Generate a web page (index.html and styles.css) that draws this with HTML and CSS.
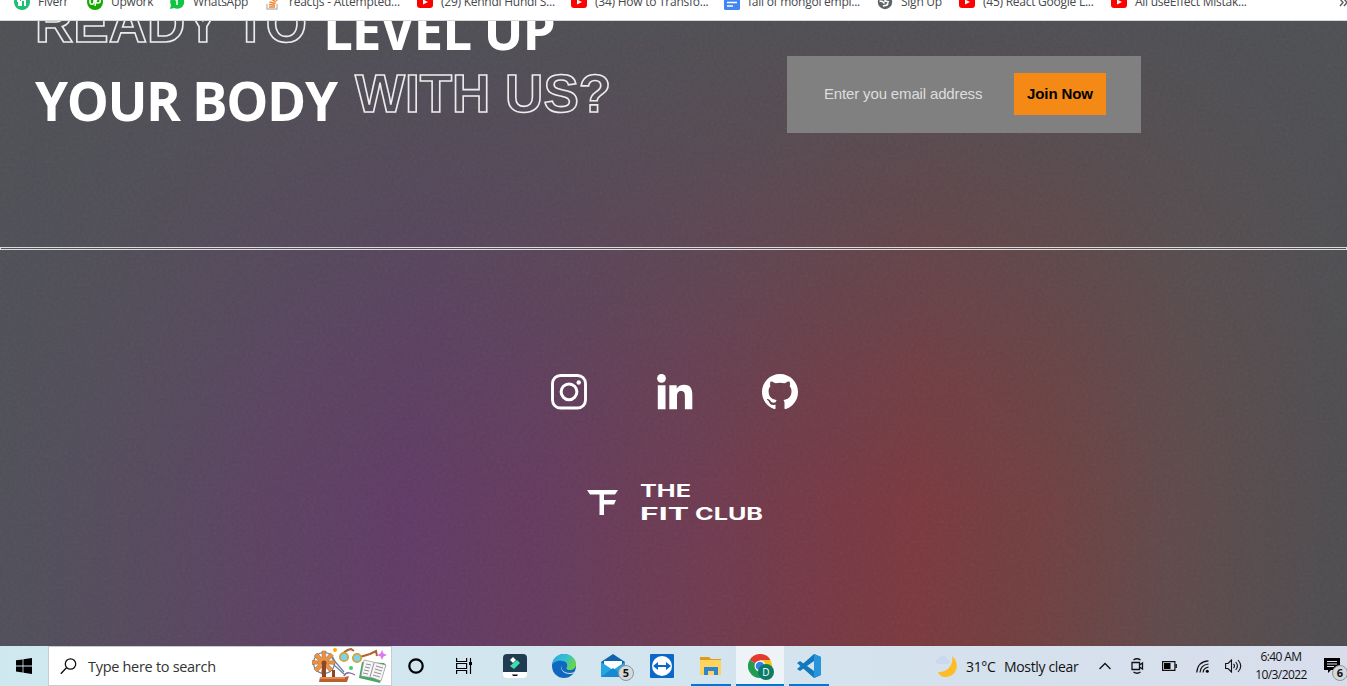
FILE: index.html
```html
<!DOCTYPE html>
<html lang="en">
<head>
<meta charset="utf-8">
<title>The Fit Club</title>
<link rel="stylesheet" href="styles.css">
</head>
<body>
<nav class="bookmarks">
  <div class="bm b1"><svg viewBox="0 0 16 16"><circle cx="8" cy="8" r="8" fill="#1dbf73"/><path d="M5 12V7H4V5h1c0-2 2-3 4-2v2H7.500M7 6h4v6M7 7v5" fill="none" stroke="#fff" stroke-width="2"/></svg><span>Fiverr</span></div>
  <div class="bm b2"><svg viewBox="0 0 16 16"><circle cx="8" cy="8" r="8" fill="#14a800"/><path d="M3 5v3c0 3 4 3 4 0V5c1 3 2 4 4 4 3 0 3-4 0-4-2 0-2 2-3 7" fill="none" stroke="#fff" stroke-width="1.500"/></svg><span>Upwork</span></div>
  <div class="bm b3"><svg viewBox="0 0 16 16"><path d="M1 15l1-4A7 7 0 1 1 5 14z" fill="#12c443"/><path d="M6 6l2-1v6" fill="none" stroke="#fff" stroke-width="1.500"/></svg><span>WhatsApp</span></div>
  <div class="bm b4"><svg viewBox="0 0 16 16"><path d="M2 10v5h10v-5" fill="none" stroke="#bcbbbb" stroke-width="1.400"/><path d="M4 13h6M4 10.500l6 .7M4.500 8l6 1.500M6 5l5 3M9 2l3 5" fill="none" stroke="#f48024" stroke-width="1.400"/></svg><span>reactjs - Attempted...</span></div>
  <div class="bm b5"><svg viewBox="0 0 16 16"><rect y="2" width="16" height="12" rx="3" fill="#f00"/><path d="M6 5.500v5L11 8z" fill="#fff"/></svg><span>(29) Kehndi Hundi S...</span></div>
  <div class="bm b6"><svg viewBox="0 0 16 16"><rect y="2" width="16" height="12" rx="3" fill="#f00"/><path d="M6 5.500v5L11 8z" fill="#fff"/></svg><span>(34) How to Transfo...</span></div>
  <div class="bm b7"><svg viewBox="0 0 16 16"><rect width="16" height="16" rx="1.500" fill="#4285f4"/><path d="M3 5h10M3 8.500h10M3 12h6" stroke="#fff" stroke-width="1.600"/></svg><span>fall of mongol empi...</span></div>
  <div class="bm b8"><svg viewBox="0 0 16 16"><circle cx="8" cy="8" r="7.200" fill="#5f6368"/><path d="M2.500 7l3 .5 2 2M9 4.500l-1 2.500 4 1M6 12l4-1 1-2" fill="none" stroke="#fff" stroke-width="1.700"/></svg><span>Sign Up</span></div>
  <div class="bm b9"><svg viewBox="0 0 16 16"><rect y="2" width="16" height="12" rx="3" fill="#f00"/><path d="M6 5.500v5L11 8z" fill="#fff"/></svg><span>(45) React Google L...</span></div>
  <div class="bm b10"><svg viewBox="0 0 16 16"><rect y="2" width="16" height="12" rx="3" fill="#f00"/><path d="M6 5.500v5L11 8z" fill="#fff"/></svg><span>All useEffect Mistak...</span></div>
  <svg class="more" viewBox="0 0 10 8"><path d="M1 0l3 3.500L1 7M5 0l3 3.500L5 7" fill="none" stroke="#5f6368" stroke-width="1.500"/></svg>
</nav>

<main class="page">
  <svg class="grain" aria-hidden="true"><filter id="grain"><feTurbulence type="fractalNoise" baseFrequency="0.35" numOctaves="2" seed="4"/><feColorMatrix type="saturate" values="0"/></filter><rect width="100%" height="100%" filter="url(#grain)"/></svg>
  <section class="join">
    <h1 class="title">
      <span class="line"><span class="outline ready">READY TO</span><span class="solid level">LEVEL UP</span></span>
      <span class="line"><span class="solid body">YOUR BODY</span><span class="outline with">WITH US?</span></span>
    </h1>
    <form class="form">
      <input class="email" type="text" placeholder="Enter you email address">
      <button class="btn" type="button">Join Now</button>
    </form>
  </section>
  <hr class="rule">
  <footer class="footer">
    <div class="social">
      <svg viewBox="0 0 36 36"><rect x="1.500" y="1.500" width="33" height="32.500" rx="8" fill="none" stroke="#fff" stroke-width="2.900"/><circle cx="18" cy="17.800" r="7.900" fill="none" stroke="#fff" stroke-width="3"/><circle cx="27.700" cy="8.500" r="2.200" fill="#fff"/></svg>
      <svg viewBox="0 0 36 36"><circle cx="4.500" cy="4.300" r="4.400" fill="#fff"/><path d="M.8 11.300h7.700V35.300H.8zM12.300 11.300h7.400v3.300c1.300-2.400 4-3.900 7.300-3.900 6.500 0 8.300 3.800 8.300 10.400v14.200h-7.400V22.700c0-3.100-.2-5.700-3.800-5.700-3.500 0-4.100 2.600-4.100 5.500v12.800h-7.700z" fill="#fff"/></svg>
      <svg viewBox="0 0 16 16"><path d="M8 0C3.580 0 0 3.580 0 8c0 3.540 2.290 6.530 5.470 7.590.4.070.55-.17.55-.38 0-.19-.01-.82-.01-1.490-2.010.37-2.530-.49-2.690-.94-.09-.23-.48-.94-.82-1.130-.28-.15-.68-.52-.01-.53.63-.01 1.080.58 1.230.82.72 1.210 1.870.87 2.330.66.07-.52.28-.87.51-1.070-1.780-.2-3.640-.89-3.640-3.950 0-.87.31-1.590.82-2.150-.08-.2-.36-1.020.08-2.120 0 0 .67-.21 2.200.82a7.600 7.600 0 0 1 4 0c1.530-1.040 2.200-.82 2.200-.82.44 1.100.16 1.920.08 2.120.51.56.82 1.270.82 2.150 0 3.070-1.870 3.750-3.650 3.950.29.25.54.73.54 1.480 0 1.070-.01 1.930-.01 2.200 0 .21.150.46.550.38A8 8 0 0 0 16 8c0-4.420-3.580-8-8-8z" fill="#fff"/></svg>
    </div>
    <div class="logo">
      <svg class="mark" viewBox="0 0 32 26"><path d="M0 0h31l-3 4.500H17V10h12l-2 4.500H17V25h-4.500V4.500H3z" fill="#fff"/></svg>
      <svg class="name" viewBox="0 0 124 42"><text x="-1" y="16" textLength="51" lengthAdjust="spacingAndGlyphs">THE</text><text x="-1" y="39" textLength="49" lengthAdjust="spacingAndGlyphs">FIT</text><text x="54" y="39" textLength="68" lengthAdjust="spacingAndGlyphs">CLUB</text></svg>
    </div>
  </footer>
</main>

<div class="taskbar">
  <div class="start"><svg viewBox="0 0 16 16"><path d="M0 2.300l6.600-.9v6.100H0zM7.400 1.300L16 0v7.500H7.400zM0 8.400h6.600v6.100L0 13.600zM7.400 8.400H16V16l-8.600-1.300z"/></svg></div>
  <div class="search">
    <svg class="lens" viewBox="0 0 17 17"><circle cx="10.500" cy="6" r="5.200" fill="none" stroke="#111" stroke-width="1.300"/><path d="M6.500 9.700L.8 15.700" stroke="#111" stroke-width="1.400"/></svg>
    <span class="hint">Type here to search</span>
    <svg class="doodle" viewBox="0 0 76 36">
      <g stroke="#6681a8" stroke-width="1.200" fill="none"><circle cx="12" cy="15" r="10.500"/><path d="M20 10l12 14M22 17l10 9"/></g>
      <path d="M10 3h4l-.5 7 5-5 3 3-5.500 5 7-.5v4l-7-.5 5 5-3 3-4.500-5v7h-4l.5-7-5 5-3-3 5-5-7 .5v-4l7 .5-5-5 3-3 5 5z" fill="#e79345" stroke="#b9642f" stroke-width=".5"/>
      <g fill="#8d452b"><circle cx="12" cy="15" r="2.500"/><path d="M10 15h4v15h-4zM20 22h3v8h-3z"/></g>
      <path d="M8 29h25l4-1-2 6H7z" fill="#b9602e"/><path d="M8 29h25v2H8z" fill="#df8a4a"/>
      <path d="M30 8c1-3 4-6 9-7l3 2M48 9l10-3 6-3 1 5" fill="none" stroke="#b5632c" stroke-width="2"/>
      <circle cx="32" cy="9" r="4.200" fill="#76d6ef" stroke="#d9a02f" stroke-width="1.700"/><circle cx="45" cy="10" r="4.200" fill="#76d6ef" stroke="#d9a02f" stroke-width="1.700"/>
      <path d="M50 14l-3 16 13 3 8 2 6-18-2-2z" fill="#43a863"/><path d="M52 12l9 2 13 3-5 16-8-3-12-2z" fill="#f7f4f4" stroke="#888" stroke-width=".6"/><path d="M62 15l-4 14M54 16l5 1M53 19l5 1M52 22l5 1M51 25l5 1M64 18l7 2M63 21l7 2M62 24l7 2M61 27l7 2" stroke="#858894" stroke-width=".9"/>
      <circle cx="23" cy="2" r="2" fill="#fa0"/><circle cx="39" cy="20" r="2" fill="#42cc72"/><path d="M70 2l1.500 3.500L75 7l-3.500 1.500L70 12l-1.500-3.500L65 7l3.500-1.500z" fill="#db78ef"/><path d="M32 28c2-5 8-3 11-1" fill="none" stroke="#8a6a9a" stroke-width="1.500"/>
    </svg>
  </div>
  <div class="task first"><svg class="i16" viewBox="0 0 16 16"><circle cx="8" cy="8" r="6.700" fill="none" stroke="#000" stroke-width="2.200"/></svg></div>
  <div class="task"><svg class="i16" viewBox="0 0 16 16"><path d="M.6 0v3.500h10V0M.6 16v-3.500h10V16M.6 5.500h10v5H.6zM14.500 0v16" fill="none" stroke="#000" stroke-width="1.200"/><path d="M13 4h3v3h-3z"/></svg></div>
  <div class="task wide"><svg class="i24" viewBox="0 0 24 24"><path d="M0 18h24v2q0 4-4 4H4q-4 0-4-4z" fill="#fff"/><path d="M4 0h16q4 0 4 4v14H0V4q0-4 4-4z" fill="#203c50"/><path d="M10 3l3 3-3 3-3-3z" fill="#fff"/><path d="M7 12l7-6 3 3-6 6z" fill="#3be0b0"/><path d="M9 20.500h6l-1 1.500h-4z" fill="#111"/></svg></div>
  <div class="task"><svg class="i24" viewBox="0 0 24 24"><defs><linearGradient id="eg" x2="1" y2=".4"><stop stop-color="#2aa8e6"/><stop offset=".6" stop-color="#35c1d0"/><stop offset="1" stop-color="#67d64b"/></linearGradient></defs><circle cx="12" cy="12" r="12" fill="#0f68bd"/><path d="M0 11C1 4 6 0 12 0c7 0 12 5 12 10 0 4-3 6-6 6-4 0-4-2-3-3 1-3-1-6-5-6C5 6 1 9 0 11z" fill="url(#eg)"/><path d="M10.500 10c-3 3 0 9 7 9 3 0 5-1 6-2l-1 2c-4 2-10 1-12-2-2-2-2-5 0-7z" fill="#d4e7ef"/></svg></div>
  <div class="task"><svg class="i24" viewBox="0 0 24 24"><path d="M0 8l12-8 12 8v4H0z" fill="#1263ae"/><path d="M3 7h18v8H3z" fill="#fff"/><path d="M0 8l12 8 12-8v15H0z" fill="#27a5e3"/><path d="M0 23l12-9 12 9z" fill="#1689d0"/></svg><b class="count mail">5</b></div>
  <div class="task"><svg class="i24" viewBox="0 0 24 24"><rect width="24" height="24" rx="1" fill="#0b68c9"/><circle cx="12" cy="12" r="10" fill="#fff"/><path d="M3 12l5-4v3h8V8l5 4-5 4v-3H8v3z" fill="#0b68c9"/></svg></div>
  <div class="task open"><svg class="i24" viewBox="0 0 24 24"><path d="M1 3h9l2 2h10v5H1z" fill="#e19b1a"/><path d="M1 6h21v15H1z" fill="#ffd35f"/><path d="M5 13h14v8h-4v-4H9v4H5z" fill="#2f83cf"/></svg></div>
  <div class="task open active"><svg class="i24" viewBox="0 0 24 24"><circle cx="12" cy="12" r="12" fill="#fff"/><path d="M12 12L1.600 6A12 12 0 0 1 22.400 6z" fill="#e33b2e"/><path d="M12 12L1.600 6A12 12 0 0 0 12 24l5-9z" fill="#229d50"/><path d="M12 12l0 12A12 12 0 0 0 22.400 6H12z" fill="#fbc319"/><circle cx="12" cy="12" r="5.500" fill="#fff"/><circle cx="12" cy="12" r="4.300" fill="#377ef0"/></svg><span class="profile">D</span></div>
  <div class="task open"><svg class="i24" viewBox="0 0 24 24"><path d="M17 0l7 3v18l-7 3L0 9l3-2 14 10V7L3 17l-3-2z" fill="#1179bd"/><path d="M17 0l7 3v18l-7 3z" fill="#2695db"/></svg></div>

  <div class="tray">
    <svg class="moon" viewBox="0 0 24 22"><path d="M17 1c8 6 6 20-6 21-4 0-7-2-8-5 9 1 16-7 14-16z" fill="#fdbd25"/><path d="M3 9C-1 8 0 4 4 4c1-5 8-4 8 0 4 0 4 5 0 5z" fill="#c9d9ee"/></svg>
    <span class="weather">31°C</span><span class="weather clear">Mostly clear</span>
    <svg class="chev" viewBox="0 0 12 8"><path d="M.5 7L6 1.500 11.500 7" fill="none" stroke="#111" stroke-width="1.300"/></svg>
    <svg class="meet" viewBox="0 0 13 16"><path d="M1 4.500h7.500v7H1zM8.500 7l3-2v6l-3-2M2.500 2q3.500-2.500 7 0M2.500 14q3.500 2.500 7 0" fill="none" stroke="#111" stroke-width="1.300"/></svg>
    <svg class="battery" viewBox="0 0 15 10"><path d="M.6.600h12.300v8.800H.6zM14.300 3v4" fill="none" stroke="#111" stroke-width="1.200"/><path d="M2 2h6.500v6H2z"/></svg>
    <svg class="wifi" viewBox="0 0 13 13"><path d="M.8 12.500Q1.500 1.500 12.500.8M4 12.500Q4.500 5 12.500 4M7 12.500Q7.500 8 12.500 7.200" fill="none" stroke="#111" stroke-width="1.200"/><circle cx="11.300" cy="11.300" r="1.500"/></svg>
    <svg class="sound" viewBox="0 0 17 14"><path d="M.6 4.500h2.400L6.500 1v12L3 9.500H.6zM8.500 4.800q2 2.200 0 4.400M10.700 3q3.500 4 0 8M13 1q5.500 6 0 12" fill="none" stroke="#111" stroke-width="1.100"/></svg>
    <div class="clock"><span class="time">6:40 AM</span><span class="date">10/3/2022</span></div>
    <div class="notes"><svg viewBox="0 0 16 16"><path d="M0 0h16v12H7l-3 3v-3H0z"/><path d="M3 3.500h10M3 6h10M3 8.500h7" stroke="#dbe0ee"/></svg><b class="count note">6</b></div>
  </div>
</div>
</body>
</html>
```
FILE: styles.css
```css
* { box-sizing: border-box; }
body {
  margin: 0;
  width: 1347px;
  height: 686px;
  overflow: hidden;
  display: flex;
  flex-direction: column;
  font-family: "Open Sans", "Noto Sans", sans-serif;
}
svg { display: block; flex: none; }

.bookmarks {
  height: 21px;
  flex: none;
  display: flex;
  padding-left: 14px;
  background: #fff;
  border-bottom: 1px solid #d5d7da;
  overflow: hidden;
}
.bm { display: flex; gap: 8px; flex: none; margin-top: -6px; height: 16px; letter-spacing: -.25px; }
.bm svg { width: 16px; height: 16px; }
.bm span { font-size: 12px; line-height: 16px; color: #45484c; white-space: nowrap; }
.b1 { width: 73px; }
.b2 { width: 82px; }
.b3 { width: 96px; letter-spacing: -.3px; }
.b4 { width: 152px; }
.b5 { width: 154px; }
.b6 { width: 153px; }
.b7 { width: 153px; }
.b8 { width: 82px; }
.b9 { width: 152px; }
.b10 { width: 140px; }
.more { width: 10px; height: 8px; margin: -1px -2px 0 auto; }

.page {
  position: relative;
  height: 625px;
  flex: none;
  overflow: hidden;
  background:
    linear-gradient(180deg, rgba(77,79,83,.96), rgba(77,79,83,.76) 110px, rgba(77,79,83,.5) 229px, rgba(77,79,83,.22) 350px, rgba(77,79,83,0) 480px),
    linear-gradient(93deg, #4e5058 0, #544a5c 150px, #5c4162 290px, #603a65 430px, #643a5e 560px, #6d3a51 710px, #763844 850px, #7a383e 940px, #703f40 1070px, #5f494a 1200px, #4f4c4f 1347px);
}
.grain { position: absolute; inset: 0; width: 100%; height: 100%; opacity: .06; }
.join { position: relative; height: 226px; display: flex; align-items: flex-start; }
.title { margin: -25px 0 0 35px; width: 752px; display: flex; flex-direction: column; font-size: 53px; line-height: 70px; }
.line { display: flex; align-items: flex-start; height: 70px; white-space: nowrap; }
.solid { color: #fff; font-weight: 700; letter-spacing: -1.15px; line-height: 68px; }
.level { width: 240px; }
.body { width: 320px; letter-spacing: -1.4px; line-height: 70px; }
.outline {
  font-family: "Liberation Sans", Arial, sans-serif;
  font-weight: 700;
  line-height: 55px;
  color: transparent;
  -webkit-text-stroke: 1.6px #ececec;
}
.ready { width: 288px; }
.form { width: 354px; height: 77px; margin-top: 35px; padding: 17px 35px; display: flex; justify-content: space-between; background: #808080; }
.email { width: 180px; border: 0; padding: 0 2px 2px; background: transparent; font: 15px "Liberation Sans", Arial, sans-serif; letter-spacing: -.15px; }
.email::placeholder { color: #ddd; }
.btn { width: 92px; height: 42px; padding: 0 0 2px; border: 0; background: #f48915; color: #000; font: 700 15px "Liberation Sans", Arial, sans-serif; letter-spacing: -.1px; }
.rule { position: relative; margin: 0; height: 3px; border: 1px solid #dcdcdc; }

.footer { position: relative; display: flex; flex-direction: column; align-items: center; padding-top: 124px; }
.social { display: flex; gap: 69.500px; margin-left: 2px; }
.social svg { width: 36px; height: 36px; }
.logo { display: flex; margin-top: 71px; width: 174px; gap: 22px; }
.mark { width: 32px; height: 26px; margin-top: 9px; }
.name { width: 124px; height: 42px; overflow: visible; }
.name text { font: 700 17px "Inter", sans-serif; fill: #fff; }

.taskbar { height: 40px; flex: none; display: flex; background: linear-gradient(90deg, #cfe8f0, #d3e5ef 50%, #d8ddec); font-size: 14px; color: #111; }
.start { width: 48px; display: flex; align-items: center; justify-content: center; }
.start svg { width: 16px; height: 16px; }
.search { width: 344px; border: 1px solid #c6cdd1; background: #fff; display: flex; align-items: center; padding-left: 11px; }
.lens { width: 17px; height: 17px; }
.hint { width: 224px; margin-left: 11px; font-size: 14.500px; letter-spacing: -.3px; color: #333; }
.doodle { width: 76px; height: 36px; }
.task { width: 48px; margin-right: 1px; display: flex; align-items: center; justify-content: center; position: relative; }
.first { margin-right: 0; }
.wide { margin-left: 2px; }
.i16 { width: 16px; height: 16px; }
.i24 { width: 24px; height: 24px; }
.open::after { content: ""; position: absolute; left: 4px; right: 4px; bottom: 0; height: 2px; background: #0078d7; }
.active { background: #edf3f7; }
.active::after { left: 0; right: 0; }
.count { position: absolute; width: 16px; height: 16px; border: 1px solid #8d959b; border-radius: 50%; background: #d4d9dc; font-size: 11px; line-height: 14px; text-align: center; }
.mail { left: 29px; top: 19px; }
.profile { position: absolute; left: 22px; top: 18px; width: 16px; height: 16px; border-radius: 50%; background: #0b7c68; color: #fff; font-size: 10px; line-height: 16px; text-align: center; }
.tray { margin-left: auto; width: 412px; display: flex; align-items: center; }
.moon { width: 24px; height: 22px; }
.weather { width: 29px; margin-left: 7px; letter-spacing: -.35px; white-space: nowrap; }
.clear { width: 76px; margin-left: 9px; }
.chev { width: 12px; height: 8px; margin-left: 19px; }
.meet { width: 13px; height: 16px; margin-left: 20px; }
.battery { width: 15px; height: 10px; margin-left: 18px; }
.wifi { width: 13px; height: 13px; margin-left: 19px; }
.sound { width: 17px; height: 14px; margin-left: 16px; }
.clock { width: 54px; margin-left: 12px; display: flex; flex-direction: column; align-items: center; font-size: 12px; line-height: 18px; letter-spacing: -.6px; white-space: nowrap; }
.notes { position: relative; margin-left: 16px; }
.notes svg { width: 16px; height: 16px; }
.note { left: 8px; top: 7px; }
```
